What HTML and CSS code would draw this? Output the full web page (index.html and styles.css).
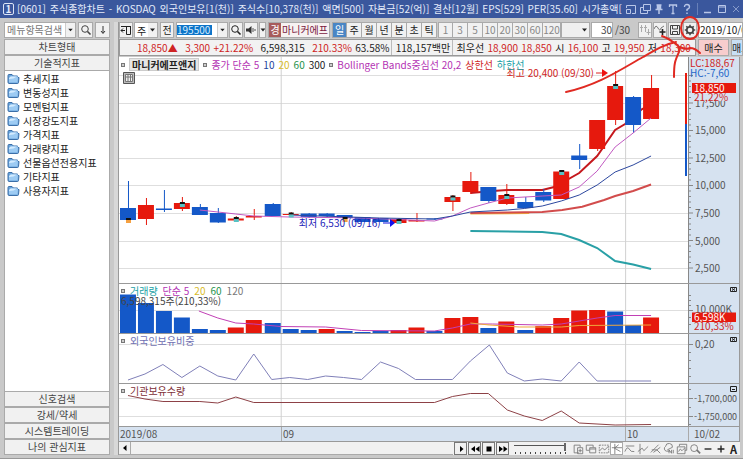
FILE: index.html
```html
<!DOCTYPE html>
<html lang="ko">
<head>
<meta charset="utf-8">
<title>주식종합차트</title>
<link rel="stylesheet" href="styles.css">
</head>
<body>
<svg class="defs" aria-hidden="true">
  <symbol id="folder" viewBox="0 0 13 12"><path d="M1 9V2.500Q1 1.500 2 1.500H5L6.500 3H10.500V4.500H12L11.500 9.500Q11.400 10.500 10.500 10.500H2Q1 10.500 1 9Z" fill="#69a5dd" stroke="#3c6fa8"/><path d="M2 9.500V6L4 3.500H11L10.500 9.500Z" fill="#9dcbf3"/><path d="M2 6Q7 6 10 3.500H3.500L2 5Z" fill="#d3ebff"/></symbol>
  <symbol id="search" viewBox="0 0 12 12"><circle cx="5" cy="5" r="3.300" fill="none" stroke="currentColor"/><path d="M7.500 7.500L10.500 10.500" stroke="currentColor" stroke-width="1.600"/></symbol>
  <symbol id="caret" viewBox="0 0 8 8"><path d="M1.500 2.500H6.500L4 5.500Z" fill="currentColor"/></symbol>
</svg>
<div class="app">
  <header class="title">
    <span class="badge">1</span>
    <h1 class="caption"><span>[0601]</span><span>주식종합차트</span><span>-</span><span>KOSDAQ</span><span>외국인보유[1(천)]</span><span>주식수[10,378(천)]</span><span>액면[500]</span><span>자본금[52(억)]</span><span>결산[12월]</span><span>EPS[529]</span><span>PER[35.60]</span><span>시가총액[</span></h1>
    <div class="winbtns">
      <button aria-label="크기"><svg viewBox="0 0 12 12"><path d="M1.500 5V2.500H10.500V10.500H7M1.500 6.500H5.500V10.500H1.500Z"/></svg></button>
      <button aria-label="복사"><svg viewBox="0 0 12 12"><path d="M4.500 1.500H11.500V7.500H4.500ZM4 4.500H1.500V10.500H8.500V8"/></svg></button>
      <button aria-label="고정"><svg viewBox="0 0 12 12"><path d="M3.500 2H8.500M4.500 2V6M6 2V6M7.500 2V6M2.500 6.500H9.500M6 7V11" stroke-width="1.500"/></svg></button>
      <button aria-label="글꼴"><svg viewBox="0 0 12 12"><path d="M2.500 4V2H9.500V4M6 2V10.500M4.500 10.500H7.500" stroke-width="1.300"/></svg></button>
      <button aria-label="도움말"><svg viewBox="0 0 12 12"><path d="M3.500 4Q3.500 1.500 6 1.500T8.500 4Q8.500 5.500 6 6.500V8M6 9.500V11" stroke-width="1.400"/></svg></button>
      <i class="bar"></i>
      <button aria-label="최소화"><svg viewBox="0 0 12 12"><path d="M2 9.500H9" stroke-width="1.500"/></svg></button>
      <button aria-label="최대화"><svg viewBox="0 0 12 12"><path d="M2.500 2.500H9.500V9.500H2.500ZM2.500 4H9.500"/></svg></button>
      <button aria-label="닫기"><svg viewBox="0 0 12 12"><path d="M3 3L9 9M9 3L3 9" opacity=".6"/></svg></button>
    </div>
  </header>

  <div class="body">
    <aside class="side">
      <form class="find">
        <label class="combo"><input type="text" placeholder="메뉴항목검색" aria-label="메뉴항목검색"><svg><use href="#caret"/></svg></label>
        <button type="button" aria-label="검색"><svg><use href="#search"/></svg></button>
        <button type="button" aria-label="아래"><svg viewBox="0 0 12 12"><path d="M6 2V9M4 7L6 9.500L8 7" fill="none" stroke="#333"/></svg></button>
      </form>
      <button class="cat">차트형태</button>
      <button class="cat">기술적지표</button>
      <ul class="tree">
        <li><svg><use href="#folder"/></svg>추세지표</li>
        <li><svg><use href="#folder"/></svg>변동성지표</li>
        <li><svg><use href="#folder"/></svg>모멘텀지표</li>
        <li><svg><use href="#folder"/></svg>시장강도지표</li>
        <li><svg><use href="#folder"/></svg>가격지표</li>
        <li><svg><use href="#folder"/></svg>거래량지표</li>
        <li><svg><use href="#folder"/></svg>선물옵션전용지표</li>
        <li><svg><use href="#folder"/></svg>기타지표</li>
        <li><svg><use href="#folder"/></svg>사용자지표</li>
      </ul>
      <button class="cat">신호검색</button>
      <button class="cat">강세/약세</button>
      <button class="cat">시스템트레이딩</button>
      <button class="cat">나의 관심지표</button>
    </aside>

    <main class="main">
      <div class="tools">
        <button class="w14" aria-label="패널"><svg viewBox="0 0 12 12"><path d="M1 2.500H11M6.500 2.500V10.500H10.500V2.500M5 6.500H1M3 4.500L1 6.500L3 8.500" fill="none" stroke="#222"/></svg></button>
        <span class="pick w23"><select aria-label="구분"><option>주</option></select><svg><use href="#caret"/></svg></span>
        <button class="w14 gapr">전</button>
        <label class="combo code"><input type="text" value="195500" aria-label="종목코드"><svg><use href="#caret"/></svg></label>
        <button class="w14" aria-label="종목검색"><svg><use href="#search"/></svg></button>
        <button class="w14" aria-label="소리"><svg viewBox="0 0 12 12"><path d="M1 4.500H3.500L6.500 2V10L3.500 7.500H1Z" fill="#333"/><path d="M8 4V8M10 5V7" stroke="#555"/></svg></button>
        <button class="w8" aria-label="소리 선택"><svg><use href="#caret"/></svg></button>
        <span class="stock"><b>경</b><span>마니커에프</span></span>
        <div class="seg">
          <button class="on">일</button><button>주</button><button>월</button><button>년</button>
          <button>분</button><button>초</button><button>틱</button>
        </div>
        <div class="seg dim">
          <button>1</button><button>3</button><button>5</button><button>10</button><button>20</button><button>30</button><button>60</button><button>120</button>
        </div>
        <span class="pick off w28"><select disabled aria-label="간격"><option></option></select><svg><use href="#caret"/></svg></span>
        <label class="count"><input type="text" value="30" aria-label="봉 개수">/30</label>
        <div class="icons">
          <button aria-label="축소"><svg viewBox="0 0 12 12"><path d="M2.500 1V8M1 3.500H4M6.500 1V8M5 3.500H8M9.500 5V11M7.500 8.500H11.500" stroke="#aaa" fill="none"/></svg></button>
          <button aria-label="지표 추가"><svg viewBox="0 0 12 12"><path d="M0 5Q2 0 4 4T7 4L10 2" stroke="#777" fill="none"/><path d="M8.500 5V11M5.500 8H11.500" stroke="#222" stroke-width="1.600"/></svg></button>
          <button aria-label="저장"><svg viewBox="0 0 12 12"><path d="M1.500 1.500H10.500V10.500H1.500ZM3.500 1.500V5H8.500V1.500M3.500 10.500V7.500H8.500V10.500" stroke="#444" fill="none"/></svg></button>
          <button aria-label="설정"><svg viewBox="0 0 12 12"><circle cx="6" cy="6" r="3.200" fill="none" stroke="#444" stroke-width="1.700"/><path d="M6 .8V3M6 9V11.200M.8 6H3M9 6H11.200M2.300 2.300L3.800 3.800M8.200 8.200L9.700 9.700M9.700 2.300L8.200 3.800M3.800 8.200L2.300 9.700" stroke="#444" stroke-width="1.500"/></svg></button>
        </div>
        <input class="date" type="text" value="2019/10/02" aria-label="날짜">
      </div>

      <div class="quote">
        <div class="figures">
          <span class="r">18,850</span><span class="r tri">▲</span><span class="r wide">3,300</span><span class="r">+21.22%</span><span class="wide">6,598,315</span><span class="r wide">210.33%</span><span class="sep">63.58%</span><span class="sep">118,157백만</span><span>최우선</span><span class="r">18,900</span><span class="r">18,850</span><span>시</span><span class="r">16,100</span><span>고</span><span class="r">19,950</span><span>저</span><span class="r">18,300</span>
        </div>
        <button class="buy">매수</button>
        <button class="sell">매도</button>
      </div>

      <div class="chart">
        <section class="pane price">
          <svg class="plot" id="price" viewBox="119 57 570 226" preserveAspectRatio="none"></svg>
          <div class="legend"><i></i><b>마니커에프앤지</b><i></i><span class="m">종가 단순 5</span><span class="n">10</span><span class="y">20</span><span class="g">60</span><span>300</span><i></i><span class="m">Bollinger Bands중심선 20,2</span><span class="r">상한선</span><span class="t">하한선</span></div>
          <svg class="grip" viewBox="0 0 12 12"><path d="M.5.5H11.500V11.500H.5Z" fill="#bbb" stroke="#555"/><path d="M2.500 2.500H9.500V9.500H2.500ZM2.500 5H9.500M5 2.500V9.500M7.500 2.500V9.500" fill="#eee" stroke="#777"/></svg>
          <span class="note high">최고 20,400 (09/30)<svg viewBox="0 0 12 8"><path d="M0 4H7" stroke="#d22"/><path d="M6 0L12 4L6 8Z" fill="#e11"/></svg></span>
          <span class="note low">최저 6,530 (09/16)<svg viewBox="0 0 12 8"><path d="M0 4H8" stroke="#11d"/><path d="M7 0L12 4L7 8Z" fill="#11e"/></svg></span>
          <svg class="axis" viewBox="690 57 50 226">
            <path class="tick" id="ticks"/>
            <text x="696" y="107">17,500</text><text x="696" y="134">15,000</text><text x="696" y="162">12,500</text><text x="696" y="189">10,000</text><text x="696" y="217">7,500</text><text x="696" y="245">5,000</text><text x="696" y="272">2,500</text>
            <path d="M693 93H735V101H693Z" fill="#d6e2f0"/>
            <text class="r" x="691" y="67">LC:188,67</text><text class="b" x="691" y="77">HC:-7,60</text>
            <path d="M693 83H737V93H693Z" fill="#e6190d"/><text class="w" x="695" y="92">18,850</text><text class="r" x="695" y="101">21,22%</text>
          </svg>
        </section>
        <section class="pane volume">
          <svg class="plot" id="volume" viewBox="119 284 570 49" preserveAspectRatio="none"></svg>
          <div class="legend"><i></i><span class="t">거래량</span><span class="m">단순 5</span><span class="y">20</span><span class="g">60</span><span class="gray">120</span></div>
          <div class="legend second">6,598,315주(210,33%)</div>
          <svg class="axis" viewBox="690 284 50 49"><path class="tick" d="M690 310.500H694M690 295.500H692M690 300.500H692M690 305.500H692M690 317.500H692M690 324.500H692"/><text x="696" y="313">10,000K</text><path d="M693 312.500H737V322H693Z" fill="#e6190d"/><text class="w" x="695" y="321">6,598K</text><text class="r" x="695" y="330">210,33%</text><path class="close" d="M731.500 287.500H737.500V291.500H731.500ZM733 288.500L736 290.500M736 288.500L733 290.500"/></svg>
        </section>
        <section class="pane foreign">
          <svg class="plot" id="foreign" viewBox="119 334 570 49" preserveAspectRatio="none"></svg>
          <div class="legend"><i></i><span class="v">외국인보유비중</span></div>
          <svg class="axis" viewBox="690 334 50 49"><path class="tick" d="M690 344.500H694M690 352.500H692M690 360.500H692M690 368.500H692M690 376.500H692"/><text x="696" y="348">0,20</text><path class="close" d="M731.500 337.500H737.500V341.500H731.500ZM733 338.500L736 340.500M736 338.500L733 340.500"/></svg>
        </section>
        <section class="pane inst">
          <svg class="plot" id="inst" viewBox="119 384 570 42" preserveAspectRatio="none"></svg>
          <div class="legend"><i></i><span class="d">기관보유수량</span></div>
          <svg class="axis small" viewBox="690 384 50 42"><path class="tick" d="M690 398.500H694M690 416.500H694M690 389.500H692M690 407.500H692M690 424.500H692"/><text x="695" y="402">-1,700,000</text><text x="695" y="420">-1,750,000</text><path class="close" d="M731.500 386.500H737.500V391.500H731.500ZM733 389.500H736"/></svg>
        </section>
        <div class="dates"><span>2019/08</span><span>09</span><span>10</span><span>10/02</span></div>
      </div>

      <div class="foot">
        <div class="scroll"><button aria-label="왼쪽"><svg viewBox="0 0 12 12"><path d="M7.500 3V9L4 6Z"/></svg></button><span></span></div>
        <button aria-label="오른쪽"><svg viewBox="0 0 12 12"><path d="M5 3V9L8.500 6Z"/></svg></button>
        <button aria-label="처음"><svg viewBox="0 0 12 12"><path d="M6 3V9L2 6ZM10.500 3V9L6.500 6Z"/></svg></button>
        <button aria-label="정지"><svg viewBox="0 0 12 12"><path d="M3.500 3.500H8.500V8.500H3.500Z"/></svg></button>
        <button aria-label="재생"><svg viewBox="0 0 12 12"><path d="M2 3V9L6 6ZM6.500 3V9L10.500 6Z"/></svg></button>
        <label class="zoom"><input type="range" value="100" aria-label="속도"></label>
        <div class="draw">
          <button aria-label="새 창"><svg viewBox="0 0 14 14"><path d="M8 11.500H2.500V2.500H9.500V5M6.500 5.500H12.500V12.500H6.500ZM9.500 7V11M7.500 9H11.500"/></svg></button>
          <button aria-label="겹침"><svg viewBox="0 0 14 14"><path d="M5 8.500H1.500V2.500H9.500V5M5.500 5.500H12.500V11.500H5.500ZM5.500 7H12.500"/></svg></button>
          <button aria-label="영역"><svg viewBox="0 0 14 14"><path d="M1.500 2.500H12.500V11.500H1.500Z" stroke-dasharray="2 1"/><path d="M2 9L5 6L8 8L12 4"/></svg></button>
          <button class="sel" aria-label="커서"><svg viewBox="0 0 14 14"><path d="M4.500 1V13M1 5.500H13M4 6L11 10M4 6L9 2"/></svg></button>
          <button aria-label="평균선"><svg viewBox="0 0 14 14"><path d="M2 3.500H12M1 10Q4 3 6 7T12 10"/></svg></button>
          <button aria-label="수직선"><svg viewBox="0 0 14 14"><path d="M3.500 1V13M1 10L6 6L8 9L13 4"/></svg></button>
          <button aria-label="추세선"><svg viewBox="0 0 14 14"><path d="M1 11L10 2M4 11L12 5M2 8H8L12 12"/></svg></button>
          <button aria-label="도형"><svg viewBox="0 0 14 14"><path d="M8 9.500H4A3 3 0 0 1 3 4A4 4 0 0 1 11 5L5 8M7 12V8L10 12V8M12 8V12"/></svg></button>
          <button aria-label="차트 복사"><svg viewBox="0 0 14 14"><path d="M4 3.500V1.500H12.500V8.500H10.500M1.500 4.500H10.500V12.500H1.500ZM3 10L5 7L7 9L10 6"/></svg></button>
          <button aria-label="확대경"><svg viewBox="0 0 14 14"><path d="M9 8L13 12" stroke-width="2"/><circle cx="6" cy="6" r="4"/></svg></button>
          <button aria-label="축소"><svg viewBox="0 0 14 14"><path d="M3 7H11" stroke="#222" stroke-width="1.600"/></svg></button>
          <button aria-label="확대"><svg viewBox="0 0 14 14"><path d="M3 7H11M7 3V11" stroke="#222" stroke-width="1.600"/></svg></button>
          <button class="letter">A</button>
        </div>
      </div>
    </main>
  </div>
  <svg class="pen" viewBox="560 15 145 80" aria-hidden="true"><ellipse cx="690" cy="28" rx="9" ry="11"/><path d="M566 92C598 85 620 70 643 57C655 50 665 44 676 42M662 36Q668 38 673 42Q681 46 679 52C675 61 674 63 674 77M680 47Q686 50 690 48Q695 48 700 53"/></svg>
</div>
<script src="chart.js"></script>
</body>
</html>
```

FILE: styles.css
```css
* { box-sizing: border-box; }
body { margin: 0; font: 10px/14px "Liberation Sans Narrow", "Noto Sans CJK KR", sans-serif; color: #222; background: #c9c9c9; }
button, input, select { font: inherit; color: inherit; margin: 0; padding: 0; border-radius: 0; }
button { background: #f1f1f1; border: 1px solid #aaa; display: flex; align-items: center; justify-content: center; white-space: nowrap; overflow: hidden; }
button svg { width: 12px; height: 12px; flex: none; }
.defs { position: absolute; width: 0; height: 0; }
.app { position: relative; min-height: 100vh; display: flex; flex-direction: column; overflow: hidden; border-bottom: 3px solid #999; }

.title { height: 18px; background: #3a579d; color: #e4ebfa; display: flex; align-items: center; padding: 0 1px 0 3px; flex: none; }
.badge { width: 11px; height: 12px; line-height: 10px; border: 1px solid #dce4f6; border-radius: 2px; text-align: center; font-weight: bold; }
.caption { flex: 1; display: flex; justify-content: space-between; margin: 0 3px; font-size: 10px; font-weight: normal; white-space: nowrap; }
.winbtns { display: flex; align-items: center; gap: 2px; }
.winbtns button { background: none; border: 0; width: 12px; height: 14px; }
.winbtns path { fill: none; stroke: #b9c7e8; }
.bar { width: 1px; height: 12px; background: #6880b8; margin: 0 2px; }

.body { flex: 1; display: flex; padding: 4px 0 3px 4px; gap: 8px; }
.side { width: 106px; flex: none; display: flex; flex-direction: column; }
.find { display: flex; gap: 2px; height: 16px; margin-bottom: 1px; }
.find button { width: 15px; color: #444; }
.combo { flex: 1; min-width: 0; display: flex; align-items: center; background: #fff; border: 1px solid #aaa; }
.combo input { flex: 1; min-width: 0; width: 0; border: 0; height: 13px; padding-left: 2px; background: none; outline: 0; }
.combo input::placeholder { color: #777; opacity: 1; }
.combo svg { width: 10px; height: 14px; padding: 2px 1px; background: #f1f1f1; border-left: 1px solid #ccc; flex: none; }
.cat { height: 16px; flex: none; color: #444; border-color: #aaa; }
.tree { flex: 1; margin: 0; padding: 1px 0 0 2px; list-style: none; background: #fff; border-left: 1px solid #aaa; border-right: 1px solid #aaa; }
.tree li { display: flex; align-items: center; gap: 3px; height: 14px; }
.tree svg { width: 13px; height: 12px; }

.main { flex: 1; min-width: 0; display: flex; flex-direction: column; border-left: 1px solid #999; box-shadow: -4px 0 0 #d8d8d8; }
.tools { display: flex; height: 16px; gap: 1px; overflow: hidden; }
.tools > * { flex: none; }
.w14 { width: 14px; }
.w8 { width: 7px; }
.w8 svg { width: 8px; height: 8px; }
.w23 { width: 24px; }
.w28 { width: 29px; }
.gapr { margin: 0 1px; }
.pick { display: flex; position: relative; background: #f1f1f1; border: 1px solid #aaa; }
.pick select { appearance: none; width: 100%; border: 0; background: #fff; padding-left: 2px; line-height: 13px; }
.pick.off select { background: #eee; }
.pick svg { position: absolute; right: 0; top: 0; width: 9px; height: 14px; padding: 3px 0; background: #f1f1f1; }
.tools .code { flex: none; width: 52px; }
.code input { color: #d5ecff; background: #0d74c8; height: 10px; flex: 0 0 35px; margin-right: auto; padding: 0; }
.stock { display: flex; margin: 0 1px; background: #f7f2f2; border: 1px solid #aaa; color: #7b1840; overflow: hidden; }
.stock b { background: #a75c5c; color: #fff; width: 12px; text-align: center; font-weight: normal; }
.stock span { width: 48px; padding-left: 1px; }
.seg { display: flex; }
.seg button { width: 15px; margin-right: -1px; }
.seg button + button { width: 16px; }
.seg .on { background: #4a86c5; color: #fff; }
.seg.dim { color: #888; margin-left: 1px; }
.seg.dim button:last-child { width: 19px; }
.count { display: flex; color: #444; width: 46px; gap: 2px; line-height: 16px; }
.count input { width: 22px; border: 1px solid #aaa; background: #fff; text-align: right; }
.icons { display: flex; gap: 1px; }
.icons button { width: 14px; }
.tools .date { flex: 1; min-width: 43px; border: 1px solid #aaa; background: #fff; padding-left: 1px; }

.quote { display: flex; gap: 2px; height: 17px; margin: 1px 0; }
.figures { flex: 1; display: flex; justify-content: space-between; background: #f2f2f2; border: 1px solid #999; padding: 0 4px 0 17px; line-height: 16px; white-space: nowrap; }
.tri { margin-left: -3px; }
.wide { margin-left: 4px; }
.sep { border-right: 1px solid #bbb; padding-right: 2px; }
.buy { width: 31px; background: #f7cdcd; }
.sell { width: 12px; background: #c8dff5; justify-content: flex-start; }
.r { color: #cf2424; fill: #cf2424; }
.b { color: #2467c9; fill: #2467c9; }
.m { color: #b432b4; }
.n { color: #23439b; }
.y { color: #d8bb29; }
.g { color: #24924b; }
.t { color: #20a0a5; }
.v { color: #7070b2; }
.d { color: #803038; }
.gray { color: #777; }

.chart { flex: 1; display: flex; flex-direction: column; margin-right: 3px; background: #fff; border-right: 1px solid #999; }
.pane { position: relative; display: grid; grid-template-columns: minmax(0, 1fr) 51px; border-bottom: 1px solid #999; }
.price { flex: 226 1 227px; }
.volume { flex: 49 1 50px; }
.foreign { flex: 49 1 50px; }
.inst { flex: 42 1 43px; }
.plot { grid-area: 1 / 1; width: 100%; height: 100%; }
.axis { grid-area: 1 / 2; width: 51px; height: 100%; background: #d6e2f0; border-left: 1px solid #888; font-size: 10px; fill: #555; }
.small { font-size: 9px; }
.axis .r { fill: #cf2424; }
.axis .b { fill: #2467c9; }
.axis .w { fill: #fff; }
.tick { stroke: #888; fill: none; }
.close { stroke: #222; fill: none; }
.legend { grid-area: 1 / 1; align-self: start; display: flex; align-items: center; gap: 5px; padding-left: 2px; height: 13px; z-index: 1; white-space: nowrap; }
.legend i { width: 4px; height: 4px; border: 1px solid #777; background: #ccc; }
.price .legend { height: 15px; gap: 4px; }
.legend b { background: #e6e6e6; border: 1px solid #ccc; line-height: 11px; padding: 0 2px; }
.second { margin-top: 10px; color: #444; }
.grip { position: absolute; left: 4px; top: 15px; width: 12px; height: 12px; }
.note { position: absolute; display: flex; align-items: center; gap: 2px; white-space: nowrap; line-height: 12px; }
.note svg { height: 8px; width: 12px; }
.high { right: 131px; top: 10px; color: #cf2424; }
.low { left: 29%; top: 160px; color: #2222b8; }
.dates { display: grid; grid-template-columns: 162px minmax(0, 1fr) 63px 51px; height: 15px; background: #d6e2f0; color: #555; border-bottom: 1px solid #999; }
.dates span { padding-left: 1px; border-left: 1px solid #aaa; }
.dates span:first-child { border: 0; }
.dates span:last-child { padding-left: 5px; }

.foot { display: flex; height: 13px; gap: 1px; background: #f1f1f1; margin-right: 3px; }
.foot > button { width: 13px; border-color: #777; }
.scroll { flex: 1; display: flex; border-bottom: 1px solid #aaa; }
.scroll button { width: 12px; border-width: 0 1px 0 0; }
.zoom { width: 58px; padding: 0 2px 0 4px; background: repeating-linear-gradient(90deg, #444 0 1px, transparent 1px 5px) 5px 10px / 52px 2px no-repeat; }
.zoom input { appearance: none; display: block; width: 100%; height: 9px; background: linear-gradient(#555, #555) 0 3px / 100% 1px no-repeat; }
.zoom input::-webkit-slider-thumb { appearance: none; width: 2px; height: 8px; background: #666; }
.draw { display: flex; margin-left: 2px; }
.draw button { width: 13px; border: 0; }
.draw svg { fill: none; stroke: #777; }
.draw .sel { border: 1px solid #aaa; background: #fff; }
.draw .letter { font-weight: bold; font-size: 11px; }
.pen { position: absolute; top: 15px; right: 38px; width: 145px; height: 80px; pointer-events: none; fill: none; stroke: #e02a22; stroke-width: 2; stroke-linecap: round; }
```

FILE: chart.js
```js
const RED = '#e6190d', BLUE = '#1458c8';
const cx = i => 128 + i * 18.07;

// colour, wick top, wick bottom, body top, body bottom, marker position
const candles = [
  ['B',181,221,208,220,220,'#f5a040'],['R',198,225,205,219],['B',190,212,208.5,210],['R',197,211,203,209,204],
  ['B',204,215,207,215],['B',208,223,213,222.5],['R',216,221,218.5,220.5,219],['R',209,220,216,217.5],
  ['B',203,216,204,216],['R',212,217,214,215,214.5],['B',213,218,213.5,217],['B',213,217,213.5,216],
  ['B',215,218,215,218,219,'#f5a040'],['B',217,222,217,222],['B',218,222,218,222],['R',218,223,219,223,221],
  ['R',213,222,220,221.5],['B',218,220,218.5,219.5],['R',195,211,197,202,197.5],['R',172,194,181,192],
  ['B',187,203,187,201],['R',184,205,195,204,196],['B',197,208,202,208],['B',189,202,192,200.5],
  ['R',170,199,171.5,199,172],['B',144,169,155.5,160],['R',120,151,120,149],['R',71,125,86,120,86],
  ['B',96,133,97,125],['R',75,119,88,119]
];
const volumes = [294.5,303,311,317.5,329,330,327.5,320,323,329,330,329,331,332,331,330,327.5,331,318,317,328,321.5,330,326,318,310.5,310,311.5,325,317.5];
const volumeColors = 'BBBBBBRRBBBRBBBRRBRRBRBRRRRBBR';

const path = (d, stroke, w = 1) => `<path d="${d}" fill="none" stroke="${stroke}" stroke-width="${w}"/>`;
const rect = (x, y, w, h, c) => `<rect x="${x}" y="${y}" width="${w}" height="${h}" fill="${c}"/>`;
const line = (p, c, w) => path('M' + p, c, w);
const grid = (ys, top, bottom) => ys.map(y => path(`M119 ${y}H689`, '#dedede')).join('') +
  path(`M281.5 ${top}V${bottom}M626.5 ${top}V${bottom}`, '#d0d0d0');

let s = grid([75.5,103.5,130.5,158.5,185.5,213.5,241.5,268.5], 57, 283);
s += line('471 231 543 232 562 234 580 240 598 248 616 261 634 264.5 652 269', '#29a0a6', 2);
s += line('471 193 493 191 508 190 543 190 555 187 580 173 598 156 616 130 626 124 643 109 652 105', '#c5181d', 2);
candles.forEach(([c, h, l, t, b], i) => {
  const color = c === 'R' ? RED : BLUE, x = cx(i);
  s += rect(Math.round(x), h, 1, l - h, color) + rect(Math.round(x - 8), t, 16, b - t, color);
});
s += line('471 213.5 530 213', '#efb13b', 2);
s += line('471 213 508 212.5 543 212 563 210 583 206.7 605 200 616 196 634 191 652 184.5', '#d24c4c', 2);
s += line('200 210 236 214 254 216 290 217 362 218 435 221 453 216 471 208 489 203 508 198 543 196 562 195 580 187 598 171 616 147 634 133 652 118', '#c158c1');
s += line('290 215 380 218 435 219 453 216 471 212 508 210 525 208.5 543 206 562 201 580 195 598 185 616 172 634 165 652 156', '#2b469e');
candles.forEach((k, i) => {
  if (k[5]) s += rect(Math.round(cx(i)) - 2, k[5] - 2, 5, 2, '#111') + rect(Math.round(cx(i)) - 2, k[5], 5, 3, k[6] || '#57c2c4');
});
s += rect(686, 73, 2, 51, RED) + rect(686, 124, 2, 52, BLUE);
document.getElementById('price').innerHTML = s;

s = grid([310.5], 284, 333);
volumes.forEach((y, i) => { s += rect(Math.round(cx(i) - 8), y, 16, 333 - y, volumeColors[i] === 'R' ? RED : BLUE); });
s += line('199 311 218 318 236 323 254 324 281 326.5 326 327 362 330.5 435 331 453 328 471 324 493 324 543 325 562 324 580 321 598 318 616 315.5 652 315.5', '#c13fb5');
s += line('471 323 490 325 520 327 562 327 580 325.5 652 325', '#efa83b');
document.getElementById('volume').innerHTML = s;

document.getElementById('foreign').innerHTML = grid([344.5], 334, 383) +
  line('128 380 145 374 163 364.5 182 377.5 200 366 218 376 236 380 254 354 272 379.5 290 377.5 308 379.5 326 376 344 377.5 362 379.5 381 362 399 368.5 416 379.5 453 379.5 471 361 490 345 508 373 525 381 543 379 562 381 580 362 598 381 652 381', '#8080b8');

document.getElementById('inst').innerHTML = grid([398.5,416.5], 384, 426) +
  line('128 395.5 145 399 163 401.5 200 401.5 218 403 236 397 254 402.5 435 402.5 453 396.5 471 393.5 489 393.5 493 397 508 410 525 416 543 420.5 562 411 580 423 616 425 652 424.5', '#8d4045');

let t = '';
for (let i = 0; i < 36; i++) t += `M690 ${(75.5 + i * 5.5).toFixed(1)}h${i % 5 ? 2 : 4}`;
document.getElementById('ticks').setAttribute('d', t);
```
